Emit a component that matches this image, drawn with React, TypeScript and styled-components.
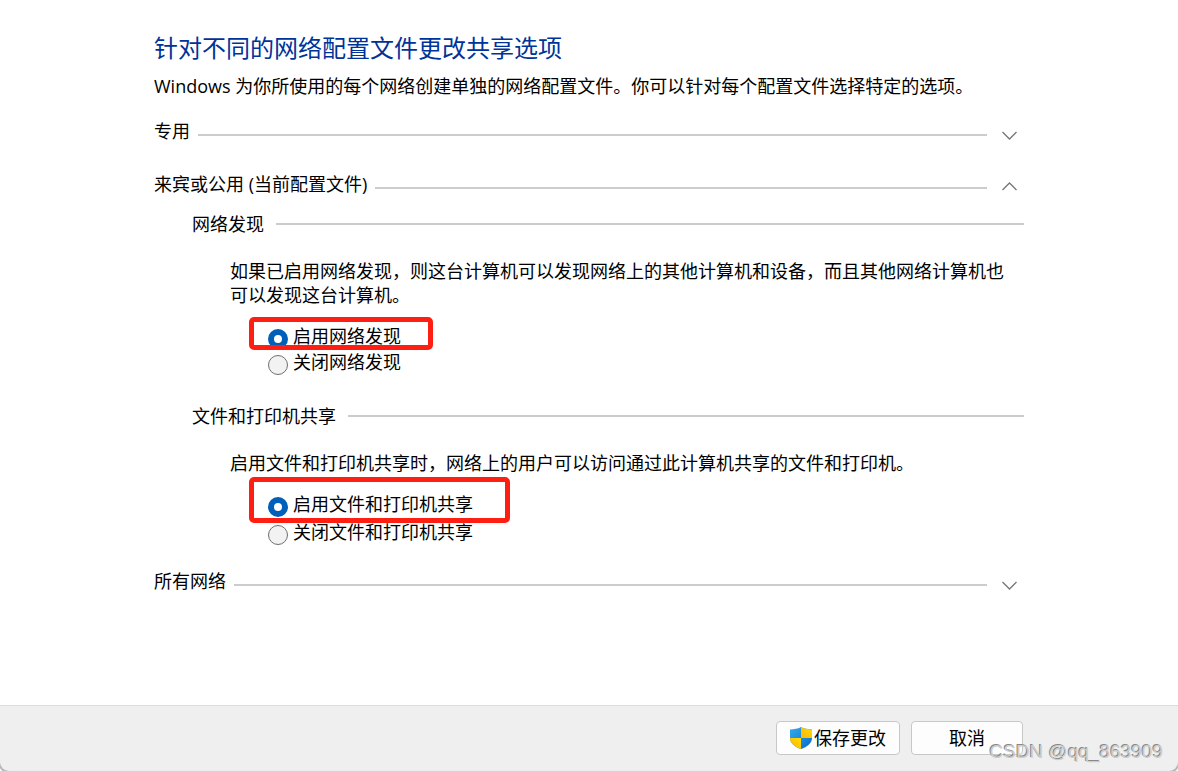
import React, { useState } from "react";
import styled, { createGlobalStyle } from "styled-components";

const GlobalStyle = createGlobalStyle`
  * { box-sizing: border-box; }
  html, body { margin: 0; padding: 0; background: #ffffff; }
  body, button, input {
    font-family: "Open Sans", "Noto Sans CJK SC", sans-serif;
    font-size: 18px;
    line-height: 24px;
    color: #000000;
  }
  h1, h2, h3, p { margin: 0; font-size: inherit; font-weight: inherit; }
`;

const Window = styled.div`
  position: relative;
  display: flex;
  flex-direction: column;
  min-height: 100vh;
  overflow: hidden;
  background: #ffffff;
`;

const Content = styled.main`
  flex: 1;
  width: 100%;
  max-width: 870px;
  margin: 0 auto;
  padding: 32px 0 24px;
`;

const Title = styled.h1`
  && {
    font-size: 24px;
    line-height: 32px;
    color: #003399;
  }
`;

const Intro = styled.p`
  padding-top: 10px;
`;

const Profile = styled.section<{ $gap: number }>`
  padding-top: ${(p) => p.$gap}px;
`;

const ProfileHeader = styled.header`
  display: flex;
  align-items: center;
  gap: 8px;
`;

const ProfileRule = styled.span`
  flex: 1;
  height: 2px;
  margin-top: 8px;
  background: #cccccc;
`;

const Toggle = styled.button<{ $open: boolean }>`
  display: flex;
  align-items: center;
  justify-content: center;
  width: 29px;
  height: 24px;
  padding: ${(p) => (p.$open ? 4 : 8)}px 0 0;
  border: 0;
  background: transparent;
`;

const Group = styled.section<{ $gap: number }>`
  padding: ${(p) => p.$gap}px 0 0 38px;
`;

const GroupHeader = styled.header`
  display: flex;
  align-items: center;
  gap: 12px;
`;

const GroupRule = styled.span`
  flex: 1;
  height: 2px;
  background: #cccccc;
`;

const Description = styled.p`
  padding: 23px 16px 0 38px;
`;

const Options = styled.div<{ $gap: number }>`
  display: flex;
  flex-direction: column;
  align-items: flex-start;
  gap: ${(p) => p.$gap}px;
  padding: 17px 0 0 76px;
`;

const Option = styled.label`
  position: relative;
  display: flex;
  align-items: center;
  gap: 5px;
`;

const Radio = styled.input`
  appearance: none;
  width: 20px;
  height: 20px;
  margin: 5px 0 -1px;
  border: 1px solid #6e6e6e;
  border-radius: 50%;
  background: #f2f2f2;

  &:checked {
    border: 6px solid #005fb8;
    background: #ffffff;
  }
`;

const Highlight = styled.span<{ $reach: number; $width: number; $height: number }>`
  position: absolute;
  left: -19px;
  top: -${(p) => p.$reach}px;
  width: ${(p) => p.$width}px;
  height: ${(p) => p.$height}px;
  border: 5px solid #ff1f12;
  border-radius: 5px;
  pointer-events: none;
`;

const Footer = styled.footer`
  padding: 15px 0 16px;
  border: 1px solid #dcdcdc;
  border-width: 1px 0 0;
  border-radius: 0 0 9px 9px;
  background: #efefef;
  box-shadow: 0 0 0 2px #b8b8b8;
  clip-path: inset(0 0 0 0);
`;

const Actions = styled.div`
  display: flex;
  justify-content: flex-end;
  gap: 11px;
  width: 100%;
  max-width: 870px;
  margin: 0 auto;
  padding-right: 1px;
`;

const ActionButton = styled.button<{ $width: number }>`
  display: flex;
  align-items: center;
  justify-content: center;
  gap: 2px;
  width: ${(p) => p.$width}px;
  height: 34px;
  padding: 0;
  border: 1px solid #c8c8c8;
  border-radius: 4px;
  background: #fdfdfd;
`;

const Watermark = styled.span`
  position: absolute;
  right: 15px;
  bottom: 7px;
  font-family: "Liberation Sans", sans-serif;
  font-size: 19px;
  color: #cccccc;
  text-shadow: -1px -1px 0 #888888;
  pointer-events: none;
`;

const Chevron = ({ up }: { up?: boolean }) => (
  <svg width="15" height="9" viewBox="0 0 15 9" fill="none" stroke="#767676" strokeWidth="1.3" aria-hidden="true">
    <path d={up ? "M.5 8 7.5 1 14.5 8" : "M.5 1 7.5 8 14.5 1"} />
  </svg>
);

const Shield = () => (
  <svg width="22" height="22" viewBox="0 0 22 22" aria-hidden="true">
    <defs>
      <linearGradient id="shieldBlue" x1="0" y1="0" x2="1" y2="1">
        <stop offset="0" stopColor="#35abe9" />
        <stop offset="1" stopColor="#0669cc" />
      </linearGradient>
      <linearGradient id="shieldGold" x1="0" y1="1" x2="1" y2="0">
        <stop offset="0" stopColor="#f7b50d" />
        <stop offset="1" stopColor="#ffdc00" />
      </linearGradient>
    </defs>
    <path d="M11 0C8 1.8 4 2.4 0 2.4V11C0 16.5 5 20 11 22C17 20 22 16.5 22 11V2.4C18 2.4 14 1.8 11 0Z" fill="url(#shieldBlue)" />
    <path d="M11 0C14 1.8 18 2.4 22 2.4V11H11Z" fill="url(#shieldGold)" />
    <path d="M0 11C0 16.5 5 20 11 22V11Z" fill="url(#shieldGold)" />
  </svg>
);

type ProfileProps = {
  title: string;
  gap: number;
  open?: boolean;
  children?: React.ReactNode;
};

function ProfileSection({ title, gap, open: initial = false, children }: ProfileProps) {
  const [open, setOpen] = useState(initial);
  return (
    <Profile $gap={gap}>
      <ProfileHeader>
        <h2>{title}</h2>
        <ProfileRule />
        <Toggle type="button" $open={open} aria-label={title} aria-expanded={open} onClick={() => setOpen(!open)}>
          <Chevron up={open} />
        </Toggle>
      </ProfileHeader>
      {open && children}
    </Profile>
  );
}

export default function App() {
  return (
    <Window>
      <GlobalStyle />
      <Content>
        <Title>针对不同的网络配置文件更改共享选项</Title>
        <Intro>Windows 为你所使用的每个网络创建单独的网络配置文件。你可以针对每个配置文件选择特定的选项。</Intro>

        <ProfileSection title="专用" gap={21} />

        <ProfileSection title="来宾或公用 (当前配置文件)" gap={29} open>
          <Group $gap={16}>
            <GroupHeader>
              <h3>网络发现</h3>
              <GroupRule />
            </GroupHeader>
            <Description>
              如果已启用网络发现，则这台计算机可以发现网络上的其他计算机和设备，而且其他网络计算机也可以发现这台计算机。
            </Description>
            <Options $gap={2}>
              <Option>
                <Radio type="radio" name="discovery" defaultChecked />
                启用网络发现
                <Highlight $reach={7} $width={184} $height={33} />
              </Option>
              <Option>
                <Radio type="radio" name="discovery" />
                关闭网络发现
              </Option>
            </Options>
          </Group>

          <Group $gap={30}>
            <GroupHeader>
              <h3>文件和打印机共享</h3>
              <GroupRule />
            </GroupHeader>
            <Description>启用文件和打印机共享时，网络上的用户可以访问通过此计算机共享的文件和打印机。</Description>
            <Options $gap={4}>
              <Option>
                <Radio type="radio" name="sharing" defaultChecked />
                启用文件和打印机共享
                <Highlight $reach={15} $width={261} $height={46} />
              </Option>
              <Option>
                <Radio type="radio" name="sharing" />
                关闭文件和打印机共享
              </Option>
            </Options>
          </Group>
        </ProfileSection>

        <ProfileSection title="所有网络" gap={25} />
      </Content>

      <Footer>
        <Actions>
          <ActionButton type="submit" $width={124}>
            <Shield />
            保存更改
          </ActionButton>
          <ActionButton type="button" $width={112}>取消</ActionButton>
        </Actions>
      </Footer>
      <Watermark>CSDN @qq_863909</Watermark>
    </Window>
  );
}
